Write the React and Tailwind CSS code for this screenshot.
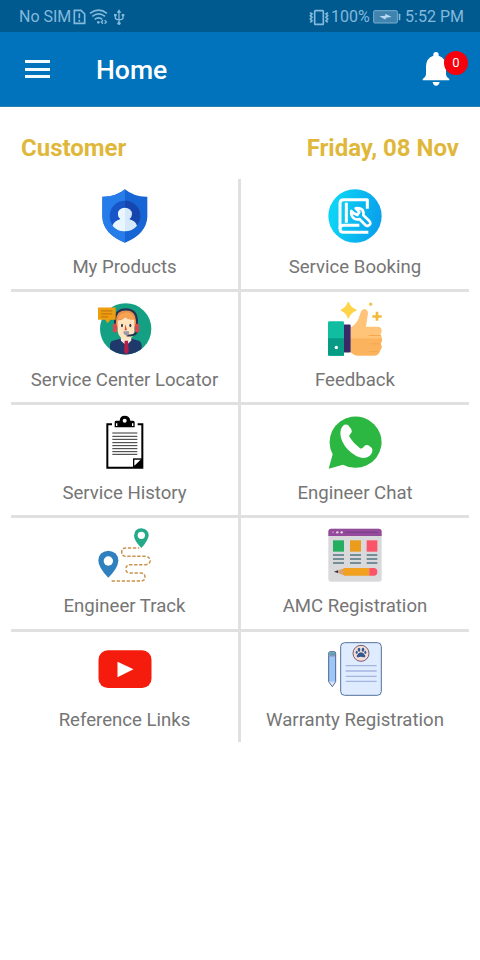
function StatusBar() {
  return (
    <div className="h-8 px-[19px] pr-4 flex items-center justify-between bg-[#005a8f] text-[#83b9dc] text-[16px]">
      <div className="flex items-center pt-px">
        <span className="w-[54px] whitespace-nowrap">No SIM</span>
        <svg className="w-[52px] h-8" viewBox="219 0 156 96" fill="none" stroke="currentColor" strokeWidth="4">
          <path d="M223 28H243L254 39V67H223Z" strokeWidth="5" />
          <path d="M238 37V52M238 56V62" strokeWidth="5" />
          <path d="M270 37Q296 18 321 37M277 46Q296 31 315 46M284 55Q296 46 307 55" strokeWidth="5" />
          <circle cx="295" cy="64" r="4" fill="currentColor" stroke="none" />
          <path d="M309 58L304 63L309 68M314 58L319 63L314 68" />
          <path d="M357 33V66M346 42V50Q346 56 357 56Q369 56 369 50V42" />
          <path d="M350 35L357 25L364 35Z" fill="currentColor" stroke="none" />
          <circle cx="357" cy="67" r="5" fill="currentColor" stroke="none" />
          <path d="M342 39H350V46H342ZM365 39H373V46H365Z" fill="currentColor" stroke="none" />
        </svg>
      </div>
      <div className="flex items-center pt-px">
        <svg className="w-[20px] h-8 mr-[2px]" viewBox="207 0 60 96" fill="none" stroke="currentColor" strokeWidth="5">
          <rect x="224" y="29" width="26" height="41" rx="2" />
          <path d="M210 35L216 39L211 44L216 49L211 54L216 59L211 64M264 35L258 39L263 44L258 49L263 54L258 59L263 64" />
        </svg>
        <span className="w-[42px] whitespace-nowrap">100%</span>
        <svg className="w-[28px] h-8 mr-[4px]" viewBox="399 0 84 96">
          <rect x="401" y="29" width="71" height="37" rx="3" fill="#3f83ae" stroke="#78aed0" strokeWidth="3" />
          <rect x="476" y="38" width="5" height="20" rx="2" fill="#83b9dc" />
          <path d="M418 46L436 44V38L455 48L437 50V56Z" fill="#b9dcf3" />
        </svg>
        <span className="whitespace-nowrap">5:52 PM</span>
      </div>
    </div>
  );
}

function AppBar() {
  return (
    <header className="h-[75px] flex items-center bg-[#0073bc] border-b border-[#2a80b2] text-white">
      <div className="ml-[25px] w-[25px] h-[18px] flex flex-col justify-between">
        <span className="h-[3px] bg-[#f2fcff]" />
        <span className="h-[3px] bg-[#f2fcff]" />
        <span className="h-[3px] bg-[#f2fcff]" />
      </div>
      <h1 className="ml-[46px] pt-[2px] text-[26.6px] font-medium">Home</h1>
      <div className="relative ml-auto mr-3 w-[46px] h-9">
        <svg className="absolute left-0 top-[1px] w-[28px] h-[34px]" viewBox="546 158 84 102" fill="white">
          <path d="M580 169V166A8 8 0 0 1 596 166V169Q617 176 618 201V226Q619 233 628 239V243H548V239Q557 233 558 226V201Q559 176 580 169Z" />
          <path d="M578 248H599Q597 259 588 259Q580 259 578 248Z" />
        </svg>
        <span className="absolute right-0 top-0 w-6 h-6 rounded-full bg-[#f5000b] flex items-center justify-center text-[13px]">
          0
        </span>
      </div>
    </header>
  );
}

function ShieldIcon() {
  return (
    <svg className="w-[54px] h-[54px]" viewBox="38 25 162 162">
      <path d="M119 26Q146 49 186 48V108Q184 159 119 186Q53 159 51 108V48Q92 49 119 26Z" fill="#1765d4" />
      <path d="M119 26Q92 49 51 48V108Q53 159 119 186Z" fill="#267ce8" />
      <path d="M119 60A46 46 0 0 0 119 152Z" fill="#1756c9" />
      <path d="M119 60A46 46 0 0 1 119 152Z" fill="#1545ad" />
      <path d="M106 116Q98 109 98 100A21 19 0 0 1 140 100Q140 109 132 116Q150 120 155 135Q141 152 119 152Q96 152 82 135Q88 120 106 116Z" fill="#d5e9fb" />
      <path d="M119 82Q98 83 98 100Q98 109 106 116Q88 120 82 135Q96 152 119 152Z" fill="#eaf6ff" />
    </svg>
  );
}

function BookingIcon() {
  return (
    <svg className="w-[54px] h-[54px]" viewBox="39 25 162 162">
      <defs>
        <linearGradient id="booking" x1="0" y1="0.4" x2="1" y2="0.6">
          <stop offset="0.1" stopColor="#0cd3f5" />
          <stop offset="1" stopColor="#0a9eec" />
        </linearGradient>
      </defs>
      <circle cx="120" cy="106" r="80" fill="url(#booking)" />
      <g fill="none" stroke="white" strokeWidth="9" strokeLinejoin="round">
        <path d="M157 84V57H86Q75 57 75 68V144Q75 155 86 155H160" />
        <path d="M75 144Q75 134 86 134H133M94 66V126" />
        <path d="M122 83L133 94L127 103L115 97L109 91Q107 107 118 114Q126 118 133 115L151 133Q157 138 163 133Q169 128 163 121L145 104Q148 89 137 84Q130 81 122 83Z" strokeWidth="8" />
      </g>
    </svg>
  );
}

function SupportIcon() {
  return (
    <svg className="w-[54px] h-[54px]" viewBox="38 23.5 162 162">
      <defs>
        <clipPath id="support">
          <circle cx="121" cy="104" r="77" />
        </clipPath>
      </defs>
      <circle cx="121" cy="104" r="77" fill="#13a083" />
      <g clipPath="url(#support)">
        <path d="M74 184V150Q75 139 88 138L111 132H135L155 138Q168 140 169 153V184Z" fill="#20396d" />
        <path d="M106 130H138V139L123 154L107 140Z" fill="#f6ead9" />
        <path d="M118 140H128L130 173L123 181L116 173Z" fill="#b51e48" />
      </g>
      <path d="M91 76Q91 48 122 48Q153 48 153 76V98H91Z" fill="#e9904c" />
      <path d="M97 79Q111 78 120 69Q131 79 147 75V113Q145 132 124 137Q101 134 97 112Z" fill="#ffe4bd" />
      <path d="M97 76Q101 57 124 54Q144 56 147 75Q131 78 120 68Q111 77 97 76Z" fill="#f7a452" />
      <path d="M89 89V78Q90 45 122 45Q154 46 155 80V107Q155 123 135 124H124" fill="none" stroke="#293251" strokeWidth="6" />
      <rect x="83" y="89" width="12" height="26" rx="5" fill="#e9414c" />
      <rect x="149" y="89" width="12" height="26" rx="5" fill="#e9414c" />
      <ellipse cx="110" cy="94" rx="3" ry="5" fill="#293251" />
      <ellipse cx="135" cy="94" rx="3" ry="5" fill="#293251" />
      <path d="M120 90L125 108H118Z" fill="#d94d39" />
      <path d="M114 111H131V122Q125 127 116 120Z" fill="#9b9aab" />
      <path d="M38 40H91V77H76L66 87L60 77H38Z" fill="#ef9e10" />
      <path d="M47 50H81M47 59H81M47 68H68" stroke="#c67b12" strokeWidth="4" />
    </svg>
  );
}

function FeedbackIcon() {
  return (
    <svg className="w-[54px] h-[54px]" viewBox="39 23.5 162 162">
      <path d="M107 99Q121 92 130 75L138 52Q143 42 152 45Q159 48 159 57L153 98H189Q200 99 200 110Q200 118 196 121Q202 128 201 139Q200 145 196 147Q204 159 195 169Q191 184 178 184H126Q118 183 107 175Z" fill="#ffc477" />
      <path d="M107 132H201V139Q200 145 196 147Q204 159 195 169Q191 184 178 184H126Q118 183 107 175Z" fill="#fbb45d" />
      <path d="M161 124H197M166 149H197M161 172H190" stroke="#f6a750" strokeWidth="3" />
      <rect x="84" y="91" width="23" height="84" rx="4" fill="#3b2868" />
      <rect x="39" y="81" width="48" height="104" rx="4" fill="#10bda0" />
      <path d="M39 132H87V185H43Q39 185 39 181Z" fill="#079b86" />
      <circle cx="64" cy="160" r="5" fill="white" />
      <path d="M100 25Q106 42 123 48Q106 54 100 71Q94 54 79 48Q94 42 100 25Z" fill="#ffd447" stroke="#ffd447" strokeWidth="4" strokeLinejoin="round" />
      <path d="M186 53V80M172 67H200" stroke="#f2ba3d" strokeWidth="8" />
      <circle cx="167" cy="30" r="5" fill="#f2c348" />
    </svg>
  );
}

function HistoryIcon() {
  return (
    <svg className="w-[54px] h-[54px]" viewBox="38 21 162 162">
      <path d="M80 49H66V179H171V49H157" fill="none" stroke="black" strokeWidth="6" />
      <path d="M88 58V42Q88 38 94 38H103Q104 23 118 23Q133 23 135 38H143Q148 38 148 43V58Z" />
      <circle cx="118" cy="38" r="6" fill="white" />
      <path d="M94 46V54M142 46V54" stroke="white" strokeWidth="4" />
      <path d="M81 75H156M81 85H156M81 94H156M81 104H156M81 113H156M81 122H156M81 131H156M81 139H156" stroke="#333" strokeWidth="3" />
      <path d="M143 179V151H171V179Z" />
      <path d="M147 173V155H166Z" fill="white" />
    </svg>
  );
}

function ChatIcon() {
  return (
    <svg className="w-[54px] h-[54px]" viewBox="39 21 162 162">
      <path d="M41 182L53 139A78 77 0 1 1 84 170Z" fill="#2cb742" />
      <path d="M84 53Q91 47 99 51L109 64Q113 71 106 78Q100 83 104 88Q115 106 134 120Q140 124 145 118Q151 108 160 112L168 118Q176 125 169 138Q160 150 144 150Q123 148 99 125Q76 101 76 75Q76 61 84 53Z" fill="white" />
    </svg>
  );
}

function TrackIcon() {
  return (
    <svg className="w-[54px] h-[54px]" viewBox="38 22 162 162">
      <path d="M79 181H168Q179 180 179 170Q179 157 166 157H133Q122 157 122 145Q122 132 134 132H181Q193 131 195 120Q193 108 181 107H120Q109 106 109 94Q110 82 121 82H162" fill="none" stroke="#c9944f" strokeWidth="4.5" strokeDasharray="10 5" />
      <path d="M69 171Q39 140 39 120Q40 92 69 90Q98 92 99 120Q98 142 69 171Z" fill="#2f80bf" />
      <circle cx="69" cy="121" r="14" fill="white" />
      <path d="M168 82Q146 59 146 45Q147 24 168 23Q190 25 190 45Q188 60 168 82Z" fill="#25aa89" />
      <circle cx="168" cy="44" r="11" fill="white" />
    </svg>
  );
}

function AmcIcon() {
  return (
    <svg className="w-[54px] h-[54px]" viewBox="39 22 162 162">
      <rect x="40" y="24" width="160" height="159" rx="9" fill="#d9d9dc" />
      <path d="M40 46V33Q40 24 49 24H191Q200 24 200 33V46Z" fill="#944b9b" />
      <circle cx="54" cy="35" r="3" fill="#c083bf" />
      <circle cx="67" cy="35" r="3.5" fill="#eadbed" />
      <circle cx="80" cy="35" r="3.5" fill="#eadbed" />
      <path d="M91 35H188" stroke="#7d3f8b" strokeWidth="4" />
      <rect x="54" y="59" width="33" height="34" fill="#25ae5f" />
      <rect x="105" y="59" width="33" height="34" fill="#eb9c1d" />
      <rect x="155" y="59" width="32" height="34" fill="#fb5368" />
      <path d="M54 103H87M105 103H138M155 103H187M54 115H87M105 115H138M155 115H187M54 127H87M105 127H138M155 127H187" stroke="#527482" strokeWidth="4" />
      <path d="M57 153L88 143V164Z" fill="#d3a384" />
      <path d="M57 153L69 149V157Z" fill="#35333a" />
      <path d="M88 142H163V165H88L82 160L87 154L81 148Z" fill="#f1a01f" />
      <path d="M163 142H176Q187 142 187 153Q187 165 176 165H163Z" fill="#fb5368" />
    </svg>
  );
}

function VideoIcon() {
  return (
    <svg className="w-[54px] h-[54px]" viewBox="292.5 35 162 162">
      <rect x="294" y="60" width="159" height="113" rx="28" fill="#f61c0d" />
      <path d="M351 94L399 117L351 141Z" fill="white" />
    </svg>
  );
}

function WarrantyIcon() {
  return (
    <svg className="w-[54px] h-[54px]" viewBox="264 35 162 162">
      <rect x="302" y="37" width="122" height="158" rx="12" fill="#dfebff" stroke="#52749c" strokeWidth="3" />
      <path d="M317 106H410M317 122H410M317 138H410M317 153H410" stroke="#a5b5e2" strokeWidth="4" />
      <circle cx="363" cy="69" r="24" fill="#f4ddd9" stroke="#795d66" strokeWidth="3" />
      <path d="M363 66Q370 66 375 75Q378 81 371 81L363 79L355 81Q348 81 351 75Q356 66 363 66Z" fill="#31598d" />
      <ellipse cx="357" cy="58" rx="4" ry="6" fill="#31598d" />
      <ellipse cx="369" cy="58" rx="4" ry="6" fill="#31598d" />
      <ellipse cx="350" cy="66" rx="3" ry="5" fill="#31598d" />
      <ellipse cx="376" cy="66" rx="3" ry="5" fill="#31598d" />
      <path d="M266 75V69Q266 64 271 64H283Q287 64 287 69V154L277 169L266 154Z" fill="#9fc6f8" stroke="#47698f" strokeWidth="3" />
      <path d="M268 66H285V76H268Z" fill="#629fb0" />
      <path d="M268 77H285" stroke="#956f93" strokeWidth="2" />
      <path d="M268 154H285L277 167Z" fill="#e8e1f5" />
    </svg>
  );
}

const rows = [
  [
    { label: "My Products", Icon: ShieldIcon },
    { label: "Service Booking", Icon: BookingIcon },
  ],
  [
    { label: "Service Center Locator", Icon: SupportIcon },
    { label: "Feedback", Icon: FeedbackIcon },
  ],
  [
    { label: "Service History", Icon: HistoryIcon },
    { label: "Engineer Chat", Icon: ChatIcon },
  ],
  [
    { label: "Engineer Track", Icon: TrackIcon },
    { label: "AMC Registration", Icon: AmcIcon },
  ],
  [
    { label: "Reference Links", Icon: VideoIcon },
    { label: "Warranty Registration", Icon: WarrantyIcon },
  ],
];

function Tile({ label, Icon }) {
  return (
    <div className="flex flex-col items-center pt-[10px]">
      <Icon />
      <span className="mt-3 leading-6 text-[18.6px] text-[#757575] whitespace-nowrap">{label}</span>
    </div>
  );
}

function App() {
  return (
    <div className="w-[480px] h-[960px] overflow-hidden bg-white font-['Roboto',sans-serif]">
      <StatusBar />
      <AppBar />
      <div className="h-[71.5px] pl-[21px] pr-[21px] pt-[25px] flex justify-between text-[24px] leading-8 font-bold text-[#dfb83b]">
        <span>Customer</span>
        <span>Friday, 08 Nov</span>
      </div>
      <main className="mx-[11px]">
        {rows.map(([left, right]) => (
          <div key={left.label} className="h-[113.3px] grid grid-cols-[227px_3px_228px] border-b-[3px] border-[#e0e0e0] last:border-b-0 last:h-[110.5px]">
            <Tile {...left} />
            <div className="bg-[#e0e0e0]" />
            <Tile {...right} />
          </div>
        ))}
      </main>
    </div>
  );
}

export default App;
